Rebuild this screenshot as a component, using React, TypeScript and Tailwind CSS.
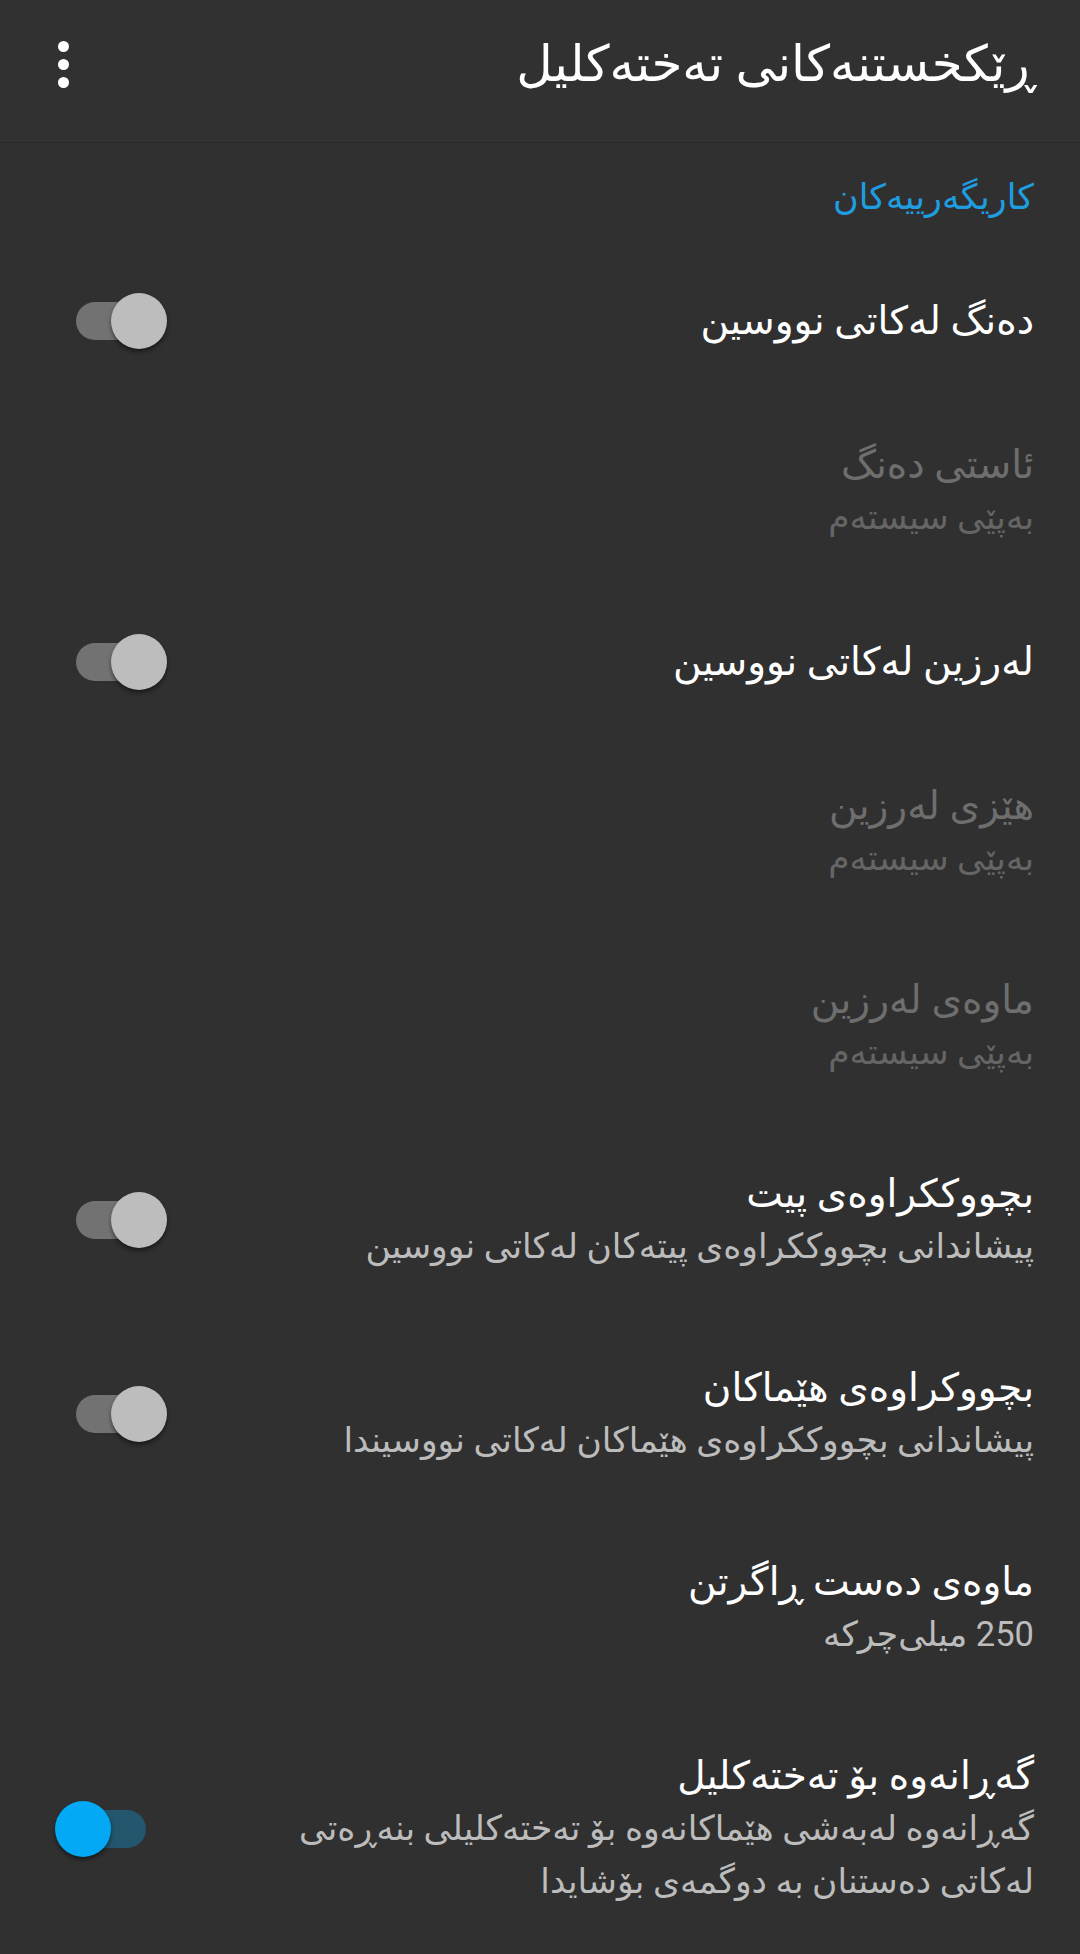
import React from 'react'

type Item = {
  title: string
  summary?: string[]
  disabled?: boolean
  toggle?: 'on' | 'off'
  height: string
}

const items: Item[] = [
  { title: 'دەنگ لەکاتی نووسین', toggle: 'off', height: 'h-[147px]' },
  { title: 'ئاستی دەنگ', summary: ['بەپێی سیستەم'], disabled: true, height: 'h-[194px]' },
  { title: 'لەرزین لەکاتی نووسین', toggle: 'off', height: 'h-[147px]' },
  { title: 'هێزی لەرزین', summary: ['بەپێی سیستەم'], disabled: true, height: 'h-[194px]' },
  { title: 'ماوەی لەرزین', summary: ['بەپێی سیستەم'], disabled: true, height: 'h-[194px]' },
  {
    title: 'بچووککراوەی پیت',
    summary: ['پیشاندانی بچووککراوەی پیتەکان لەکاتی نووسین'],
    toggle: 'off',
    height: 'h-[194px]',
  },
  {
    title: 'بچووکراوەی هێماکان',
    summary: ['پیشاندانی بچووککراوەی هێماکان لەکاتی نووسیندا'],
    toggle: 'off',
    height: 'h-[194px]',
  },
  { title: 'ماوەی دەست ڕاگرتن', summary: ['250 میلی\u200cچرکە'], height: 'h-[194px]' },
  {
    title: 'گەڕانەوە بۆ تەختەکلیل',
    summary: ['گەڕانەوە لەبەشی هێماکانەوە بۆ تەختەکلیلی بنەڕەتی', 'لەکاتی دەستنان بە دوگمەی بۆشایدا'],
    toggle: 'on',
    height: 'h-[247px]',
  },
]

function Switch({ on }: { on: boolean }) {
  return (
    <div dir="ltr" className="relative h-[56px] w-[112px] shrink-0">
      <div
        className={
          on
            ? 'absolute left-[21px] top-[9px] h-[38px] w-[70px] rounded-full bg-[#22576e]'
            : 'absolute left-[21px] top-[9px] h-[38px] w-[70px] rounded-full bg-[#727272]'
        }
      />
      <div
        className={
          on
            ? 'absolute left-0 top-0 h-[56px] w-[56px] rounded-full bg-[#03a9f4] shadow-[0_3px_4px_rgba(0,0,0,0.45)]'
            : 'absolute right-0 top-0 h-[56px] w-[56px] rounded-full bg-[#bdbdbd] shadow-[0_3px_4px_rgba(0,0,0,0.45)]'
        }
      />
    </div>
  )
}

export default function App() {
  return (
    <div
      dir="rtl"
      className="min-h-[1954px] w-[1080px] bg-[#303030] text-white"
      style={{ fontFamily: 'Roboto, "DejaVu Sans", sans-serif' }}
    >
      <header className="flex h-[143px] items-start justify-between border-b border-[#2a2a2a] bg-[#313131] pl-[58px] pr-[44px] pt-[34px]">
        <h1 className="text-[50px] leading-[60px] text-white">ڕێکخستنەکانی تەختەکلیل</h1>
        <div className="flex flex-col items-center gap-[7px] pt-[7px]">
          <span className="h-[11px] w-[11px] rounded-full bg-white" />
          <span className="h-[11px] w-[11px] rounded-full bg-white" />
          <span className="h-[11px] w-[11px] rounded-full bg-white" />
        </div>
      </header>

      <div className="h-[104px] pr-[46px] pt-[37px] text-[35px] leading-[36px] text-[#1e9ee0]">
        کاریگەرییەکان
      </div>

      {items.map((item) => (
        <div key={item.title} className={`flex items-center justify-between pl-[55px] pr-[46px] ${item.height}`}>
          <div className="flex flex-col">
            <div
              className={
                item.disabled
                  ? 'text-[39px] leading-[52px] text-[#6e6e6e]'
                  : 'text-[39px] leading-[52px] text-white'
              }
            >
              {item.title}
            </div>
            {item.summary?.map((line) => (
              <div
                key={line}
                className={
                  item.disabled
                    ? 'text-[34.5px] leading-[53px] text-[#656565]'
                    : 'text-[34.5px] leading-[53px] text-[#bcbcbc]'
                }
              >
                {line}
              </div>
            ))}
          </div>
          {item.toggle && <Switch on={item.toggle === 'on'} />}
        </div>
      ))}
    </div>
  )
}
